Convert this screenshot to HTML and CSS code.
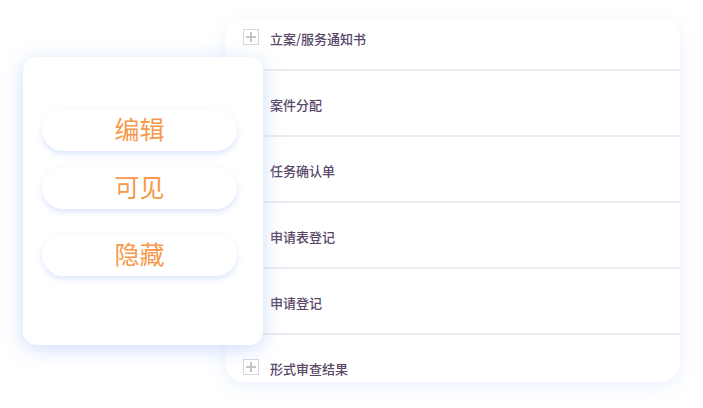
FILE: index.html
```html
<!DOCTYPE html>
<html lang="zh">
<head>
<meta charset="utf-8">
<link rel="stylesheet" href="styles.css">
</head>
<body>
<div class="stage">
  <div class="list-card">
    <ul class="list">
      <li class="row"><span class="plus"></span><span class="label">立案/服务通知书</span></li>
      <li class="row"><span class="spacer"></span><span class="label">案件分配</span></li>
      <li class="row"><span class="spacer"></span><span class="label">任务确认单</span></li>
      <li class="row"><span class="spacer"></span><span class="label">申请表登记</span></li>
      <li class="row"><span class="spacer"></span><span class="label">申请登记</span></li>
      <li class="row"><span class="plus"></span><span class="label">形式审查结果</span></li>
    </ul>
  </div>
  <div class="menu-card">
    <button class="pill pill-edit">编辑</button>
    <button class="pill pill-visible">可见</button>
    <button class="pill pill-hidden">隐藏</button>
  </div>
</div>
</body>
</html>
```

FILE: styles.css
```css
html, body {
  margin: 0;
  padding: 0;
  background: #ffffff;
}
body {
  width: 703px;
  height: 408px;
  overflow: hidden;
  font-family: "Noto Sans CJK SC", "Noto Sans", sans-serif;
}
.stage {
  position: relative;
  width: 703px;
  height: 408px;
  padding-top: 19px;
  box-sizing: border-box;
}
.list-card {
  margin-left: 225px;
  width: 455px;
  height: 363px;
  background: #fff;
  border-radius: 20px;
  box-shadow: 0 4px 18px rgba(205, 222, 252, 0.45);
  overflow: hidden;
}
.list {
  list-style: none;
  margin: -14px 0 0 0;
  padding: 0;
}
.row {
  height: 64px;
  border-bottom: 2px solid #ececef;
  display: flex;
  align-items: center;
  padding-left: 18px;
  box-sizing: content-box;
}
.plus, .spacer {
  width: 16px;
  height: 16px;
  margin-right: 11px;
  flex: none;
  box-sizing: border-box;
}
.plus {
  border: 1px solid #d8d8d8;
  position: relative;
}
.plus::before, .plus::after {
  content: "";
  position: absolute;
  background: #c4c4c4;
}
.plus::before {
  left: 2px; right: 2px; top: 6px; height: 1.5px;
}
.plus::after {
  top: 2px; bottom: 2px; left: 6px; width: 1.5px;
}
.label {
  font-size: 13px;
  color: #5a4869;
  font-weight: 500;
  line-height: 1;
  padding-top: 2px;
}
.menu-card {
  position: absolute;
  left: 23px;
  top: 57px;
  width: 240px;
  height: 288px;
  background: #fff;
  border-radius: 14px;
  box-shadow: 0 4px 20px rgba(185, 208, 250, 0.7);
  display: flex;
  flex-direction: column;
  padding: 52px 26px 0 19px;
  box-sizing: border-box;
}
.pill {
  height: 42px;
  border: none;
  border-radius: 21px;
  background: #fff;
  box-shadow: 0 3px 6px rgba(200, 218, 250, 0.65);
  font-family: "Noto Sans CJK SC", sans-serif;
  font-size: 25px;
  color: #f7994a;
  padding: 0 0 3px 0;
  line-height: 39px;
  margin: 0;
}
.pill-visible { margin-top: 16px; }
.pill-hidden { margin-top: 25px; }
```
